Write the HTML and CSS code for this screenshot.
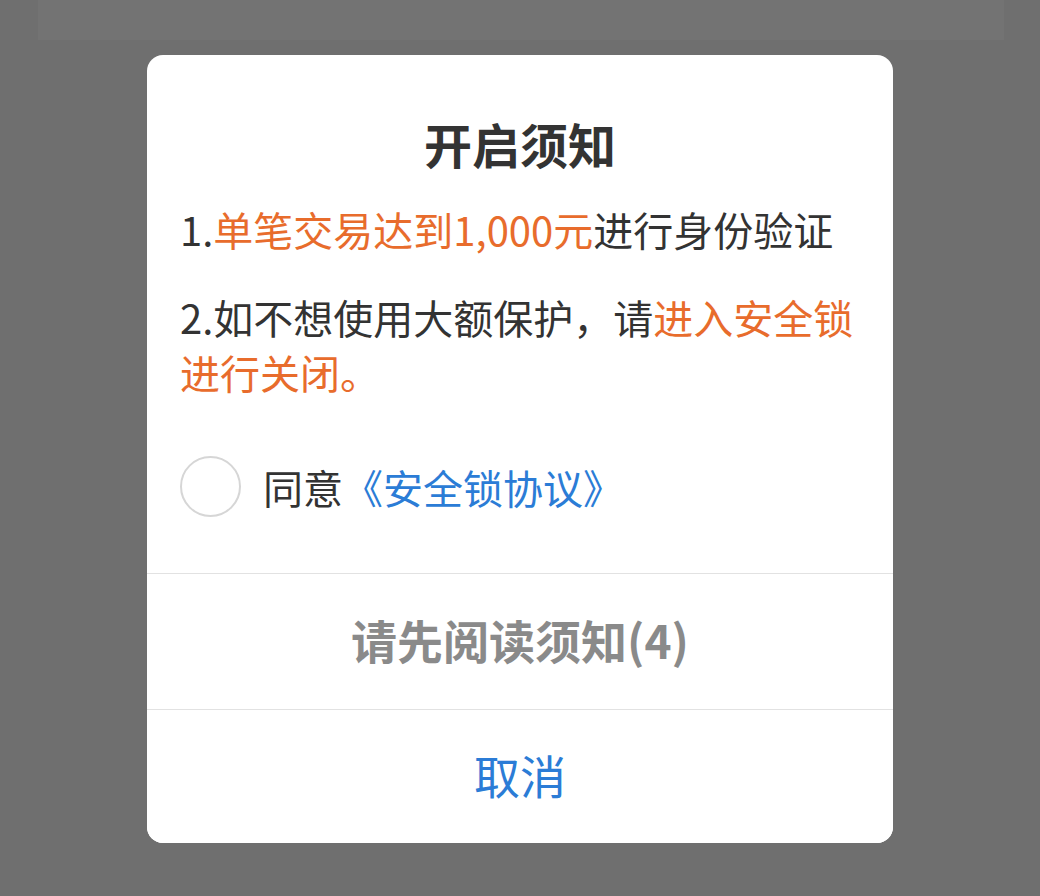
FILE: index.html
```html
<!DOCTYPE html>
<html lang="zh-CN">
<head>
  <meta charset="UTF-8" />
  <meta name="viewport" content="width=device-width, initial-scale=1.0" />
  <title>开启须知</title>
  <link rel="stylesheet" href="styles.css">
</head>
<body>
  <div class="topbar"></div>

  <div class="dialog">
    <div class="dialog-body">
      <h1 class="title">开启须知</h1>
      <p class="notice">1.<span class="hl">单笔交易达到1,000元</span>进行身份验证</p>
      <p class="notice">2.如不想使用大额保护，请<span class="hl">进入安全锁</span><br><span class="hl">进行关闭。</span></p>

      <label class="agree">
        <span class="radio"></span>
        <span class="agree-text">同意<a class="link">《安全锁协议》</a></span>
      </label>
    </div>

    <button type="button" class="action disabled">请先阅读须知(4)</button>
    <button type="button" class="action cancel">取消</button>
  </div>
</body>
</html>
```

FILE: styles.css
```css
body {
  margin: 0;
  background: #6f6f6f;
  font-family: "Noto Sans CJK SC", "Noto Sans", sans-serif;
  color: #333;
}
.topbar {
  height: 40px;
  margin: 0 36px 0 38px;
  background: #737373;
}
.dialog {
  width: 746px;
  margin: 15px 0 0 147px;
  background: #fff;
  border-radius: 16px;
  overflow: hidden;
}
.dialog-body {
  padding: 64px 33px 56px;
}
.title {
  margin: 0 0 35px;
  font-size: 48px;
  line-height: 48px;
  font-weight: 700;
  text-align: center;
  color: #333;
}
.notice {
  margin: 0 0 33px;
  font-size: 40px;
  line-height: 55px;
}
.hl {
  color: #e86c2c;
}
.agree {
  display: flex;
  align-items: center;
  margin-top: 56px;
}
.radio {
  width: 57px;
  height: 57px;
  border: 2px solid #d6d6d6;
  border-radius: 50%;
  margin-right: 22px;
  flex-shrink: 0;
}
.agree-text {
  font-size: 40px;
  line-height: 60px;
}
.link {
  color: #2b7cd6;
}
.action {
  display: block;
  width: 100%;
  height: 136px;
  border: none;
  border-top: 1px solid #e2e2e2;
  background: #fff;
  font-family: inherit;
  font-size: 46px;
  padding: 0 0 6px;
  cursor: pointer;
}
.disabled {
  color: #8a8a8a;
  font-weight: 700;
}
.cancel {
  height: 134px;
  color: #2b7cd6;
}
```
